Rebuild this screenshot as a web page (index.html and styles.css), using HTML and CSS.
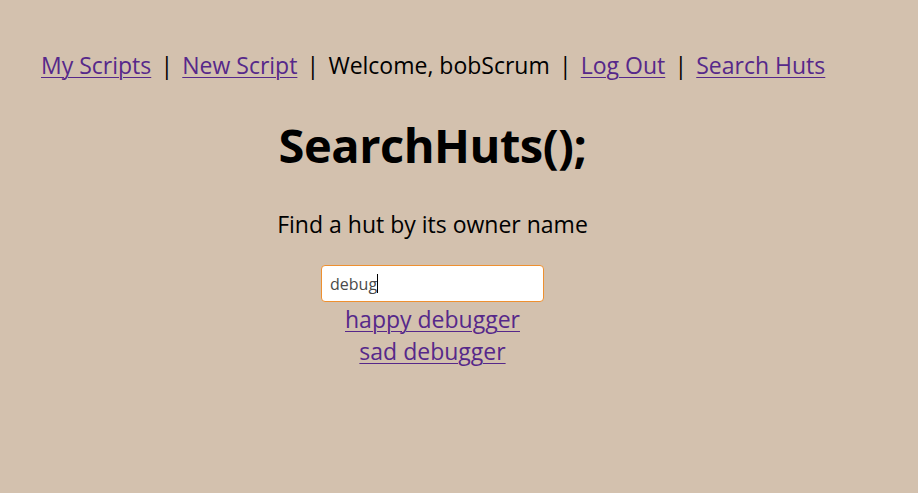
FILE: index.html
```html
<!DOCTYPE html>
<html>
<head>
<meta charset="utf-8">
<title>SearchHuts</title>
<link rel="stylesheet" href="styles.css">
</head>
<body>
<div class="page">
  <nav class="nav">
    <a href="#" class="nav-link">My Scripts</a>
    <span class="sep">|</span>
    <a href="#" class="nav-link">New Script</a>
    <span class="sep">|</span>
    <span class="welcome">Welcome, bobScrum</span>
    <span class="sep">|</span>
    <a href="#" class="nav-link">Log Out</a>
    <span class="sep">|</span>
    <a href="#" class="nav-link">Search Huts</a>
  </nav>
  <main class="content">
    <h1 class="title">SearchHuts();</h1>
    <p class="subtitle">Find a hut by its owner name</p>
    <div class="search-box"><span class="search-text">debug</span><span class="caret"></span></div>
    <ul class="results">
      <li><a href="#" class="result-link">happy debugger</a></li>
      <li><a href="#" class="result-link">sad debugger</a></li>
    </ul>
  </main>
</div>
</body>
</html>
```

FILE: styles.css
```css
html, body {
  margin: 0;
  padding: 0;
}
body {
  background: #d3c1ae;
  font-family: "Open Sans", "Noto Sans", sans-serif;
  font-size: 23px;
  color: #000;
}
.page {
  width: 783px;
  margin-left: 41px;
  padding-top: 49px;
}
.nav {
  display: flex;
  align-items: center;
  height: 32px;
  line-height: 32px;
  white-space: nowrap;
}
.nav-link {
  color: #56288a;
  text-decoration: underline;
  text-underline-offset: 3px;
  text-decoration-thickness: 1px;
}
.sep {
  width: 31px;
  text-align: center;
  flex: none;
}
.welcome {
  color: #000;
}
.content {
  display: flex;
  flex-direction: column;
  align-items: center;
}
.title {
  margin: 32px 0 0;
  font-size: 47px;
  font-weight: 700;
  line-height: 64px;
  letter-spacing: -0.5px;
}
.subtitle {
  margin: 31px 0 0;
  line-height: 32px;
}
.search-box {
  margin-top: 25px;
  width: 223px;
  height: 37px;
  box-sizing: border-box;
  border: 1px solid #ee9030;
  border-radius: 4px;
  background: #fff;
  display: flex;
  align-items: center;
  padding-left: 8px;
  font-size: 16px;
  color: #4a4a4a;
}
.caret {
  width: 1px;
  height: 19px;
  background: #000;
}
.results {
  list-style: none;
  margin: 1px 0 0;
  padding: 0;
  text-align: center;
  line-height: 32px;
}
.result-link {
  color: #56288a;
  text-decoration: underline;
  text-underline-offset: 3px;
  text-decoration-thickness: 1px;
}
```
